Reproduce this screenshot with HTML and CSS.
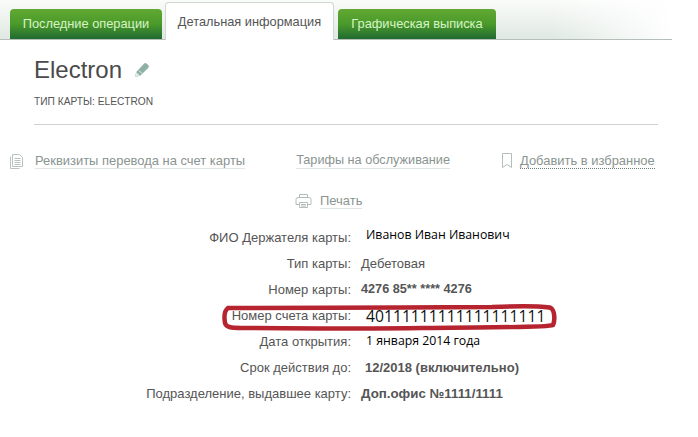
FILE: index.html
```html
<!DOCTYPE html>
<html lang="ru">
<head>
    <meta charset="UTF-8">
    <title>Детальная информация</title>
    <link rel="stylesheet" href="styles.css">
</head>
<body>
    <section class="page">
        <div class="tabs">
            <div class="tab">Последние операции</div>
            <div class="tab active">Детальная информация</div>
            <div class="tab last">Графическая выписка</div>
        </div>
        <div class="content">
            <div class="title">
                <h1>Electron</h1>
                <svg class="pencil" width="16" height="16" viewBox="0 0 16 16">
                    <path d="M1 15l1.200-5 7.800-8.200a2 2 0 0 1 2.800 0l1.400 1.300a2 2 0 0 1 0 2.800l-8 7.900z" fill="#8fb0a6"/>
                    <path d="M1 15l1.200-5 3.800 3.800z" fill="#dfe8e4"/>
                    <path d="M5 8.500l3 3" stroke="#fff" stroke-width="0.8" fill="none"/>
                </svg>
            </div>
            <div class="card-type">ТИП КАРТЫ: ELECTRON</div>
        </div>
        <div class="links">
            <div class="link-item">
                <svg class="icon" width="16" height="17" viewBox="0 0 16 17" fill="none" stroke="#b9c2be">
                    <path d="M3.500 1.500h7l3 3v9h-10z"/>
                    <path d="M1.500 3.500v12h9M5.500 5.500h6M5.500 7.500h6M5.500 9.500h6M5.500 11.500h6"/>
                </svg>
                <span class="link">Реквизиты перевода на счет карты</span>
            </div>
            <div class="link-item tariffs">
                <span class="link">Тарифы на обслуживание</span>
            </div>
            <div class="link-item favorite">
                <svg class="icon" width="10" height="16" viewBox="0 0 10 16" fill="none" stroke="#b4bdb9">
                    <path d="M.5.5h9v14l-4.500-3-4.500 3z"/>
                </svg>
                <span class="link dotted">Добавить в избранное</span>
            </div>
        </div>
        <div class="print">
            <svg class="icon" width="17" height="16" viewBox="0 0 17 16" fill="none" stroke="#b4bdb9">
                <path d="M4.500 4.500v-3h8v3M3 4.500h11a2 2 0 0 1 2 2v5h-3M4 11.500H1v-5a2 2 0 0 1 2-2"/>
                <path d="M4.500 9.500h8v5h-8zM6 11.500h5M6 13h5"/>
            </svg>
            <span class="link">Печать</span>
        </div>
        <div class="details">
            <div class="row"><div class="label">ФИО Держателя карты:</div><div class="value pasted name">Иванов Иван Иванович</div></div>
            <div class="row"><div class="label">Тип карты:</div><div class="value">Дебетовая</div></div>
            <div class="row"><div class="label">Номер карты:</div><div class="value strong card-number">4276 85** **** 4276</div></div>
            <div class="row account-row">
                <div class="label">Номер счета карты:</div>
                <div class="value account">40111111111111111111</div>
                <svg class="circle" width="336" height="30" viewBox="0 0 336 30" fill="none">
                    <path d="M6 5C60 4 180 5 270 4C300 3 322 3 329 5C333 8 333 18 331 22C325 25 250 24 200 25C130 26 60 25 20 25C8 25 4 24 3 20C2 14 2 8 6 5Z" stroke="#b5242f" stroke-width="4.500"/>
                </svg>
            </div>
            <div class="row"><div class="label">Дата открытия:</div><div class="value pasted date">1 января 2014 года</div></div>
            <div class="row"><div class="label">Срок действия до:</div><div class="value strong shifted">12/2018 (включительно)</div></div>
            <div class="row"><div class="label">Подразделение, выдавшее карту:</div><div class="value strong office">Доп.офис №1111/1111</div></div>
        </div>
    </section>
</body>
</html>
```

FILE: styles.css
```css
*{
    margin: 0;
    padding: 0;
    box-sizing: border-box;
}
body{
    background: #fff;
    font-family: "Liberation Sans", Arial, sans-serif;
    color: #444;
    overflow: hidden;
}
.page{
    width: 672px;
    height: 437px;
}

/* tabs */
.tabs{
    display: flex;
    align-items: flex-end;
    height: 40px;
    padding-left: 10px;
    gap: 3px;
    border-bottom: 1px solid #b5beb9;
    background: linear-gradient(90deg, rgba(255,255,255,0) 82%, #fff 100%), linear-gradient(#fafcfa, #dfe8e3);
}
.tab{
    width: 152px;
    height: 30px;
    line-height: 30px;
    text-align: center;
    font-size: 12.8px;
    color: #d8f3c8;
    background: linear-gradient(#62a833, #4a9a2a 50%, #216a32);
    border-radius: 4px 4px 0 0;
}
.tab.active{
    width: 169px;
    height: 38px;
    line-height: 38px;
    margin-bottom: -1px;
    color: #555;
    background: #fff;
    border: 1px solid #cfd8d3;
    border-bottom: 0;
}
.tab.last{
    width: 158px;
    margin-left: 1px;
}

/* heading */
.content{
    margin: 0 14px 0 34px;
    height: 85px;
    border-bottom: 1px solid #cfd2d0;
}
.title{
    display: flex;
    align-items: center;
    gap: 12px;
    padding-top: 15px;
}
h1{
    font-weight: normal;
    font-size: 24px;
    line-height: 30px;
    color: #4a4a4a;
}
.card-type{
    margin-top: 11px;
    font-size: 10.200px;
    color: #555;
}

/* links */
.links{
    display: flex;
    height: 24px;
    margin-top: 24px;
    padding-left: 9px;
    align-items: center;
}
.link-item{
    display: flex;
    align-items: center;
}
.link{
    font-size: 12.950px;
    line-height: 15px;
    color: #8a9490;
    border-bottom: 1px solid #dfe6e3;
}
.link.dotted{
    border-bottom: 1px dotted #6f7d78;
}
.icon{
    flex-shrink: 0;
}
.links .link-item:first-child .icon{
    margin-right: 10px;
}
.tariffs{
    margin-left: 51px;
}
.tariffs .link{
    font-size: 12.700px;
}
.favorite{
    margin-left: 52px;
}
.favorite .icon{
    margin-right: 8px;
}
.print{
    display: flex;
    align-items: center;
    gap: 8px;
    margin-top: 18px;
    padding-left: 295px;
    height: 20px;
}

/* details */
.details{
    margin-top: 13px;
}
.row{
    display: flex;
    height: 26px;
    align-items: center;
    font-size: 13px;
    color: #555;
}
.label{
    width: 351px;
    text-align: right;
}
.value{
    margin-left: 10px;
}
.strong{
    font-weight: bold;
}
.card-number{
    font-size: 12.700px;
}
.office{
    font-size: 13.300px;
}
.pasted{
    margin-left: 15px;
    color: #000;
    font-family: "Open Sans", "Liberation Sans", sans-serif;
    font-size: 12.300px;
    font-weight: 500;
}
.name{
    padding-bottom: 6px;
}
.date{
    padding-bottom: 2px;
}
.shifted{
    margin-left: 14px;
}
.account-row{
    position: relative;
}
.account{
    margin-left: 15px;
    padding-top: 2px;
    font-family: "Open Sans", sans-serif;
    font-size: 15.700px;
    color: #111;
}
.circle{
    position: absolute;
    left: 222px;
    top: 1px;
}
```
